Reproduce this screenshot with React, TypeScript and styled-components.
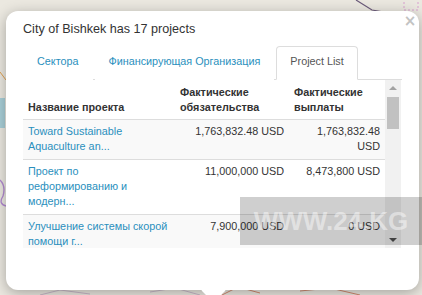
import React from 'react';
import styled, { createGlobalStyle } from 'styled-components';

const GlobalStyle = createGlobalStyle`
  html, body {
    margin: 0;
    padding: 0;
    background: #ebe8e0;
  }
  * {
    box-sizing: border-box;
  }
`;

const MapPage = styled.div`
  position: relative;
  width: 422px;
  height: 295px;
  overflow: hidden;
  background: #ebe8e0;
  font-family: 'Liberation Sans', Arial, sans-serif;
  padding: 11px 2px 0 6px;
`;

const MapLayer = styled.svg`
  position: absolute;
  left: 0;
  top: 0;
  width: 422px;
  height: 295px;
`;

const Popup = styled.div`
  position: relative;
  width: 413px;
  height: 279px;
  background: #fff;
  border-radius: 12px;
  box-shadow: 0 3px 14px rgba(0, 0, 0, 0.3);
  padding: 9px 17px 0 17px;

  &::after {
    content: '';
    position: absolute;
    left: 199px;
    bottom: -9px;
    width: 17px;
    height: 17px;
    background: #fff;
    transform: rotate(45deg);
  }
`;

const CloseButton = styled.span`
  position: absolute;
  top: 3px;
  right: 0;
  width: 18px;
  height: 14px;
  font: bold 15px/14px Tahoma, 'DejaVu Sans', sans-serif;
  color: #c3c3c3;
  text-align: center;
`;

const Title = styled.div`
  font-size: 12.6px;
  line-height: 19px;
  color: #333;
`;

const NavTabs = styled.ul`
  display: flex;
  list-style: none;
  margin: 7px 0 0 0;
  padding: 0;
  border-bottom: 1px solid #ddd;
`;

const Tab = styled.li<{ $active?: boolean }>`
  margin: 0 2px -1px 0;
  padding: 7px 13px;
  height: 34px;
  font-size: 10.8px;
  line-height: 15.4px;
  border: 1px solid ${({ $active }) => ($active ? '#ddd' : 'transparent')};
  border-bottom-color: ${({ $active }) => ($active ? '#fff' : 'transparent')};
  border-radius: 4px 4px 0 0;
  background: #fff;
  color: ${({ $active }) => ($active ? '#555' : '#2a8fbd')};
  white-space: nowrap;
`;

const TableFrame = styled.div`
  display: flex;
  height: 168px;
  width: 378px;
`;

const TableViewport = styled.div`
  width: 362px;
  overflow: hidden;
`;

const Table = styled.table`
  width: 362px;
  border-collapse: collapse;
  table-layout: fixed;
  font-size: 10.8px;
  line-height: 15.4px;
`;

const HeadCell = styled.th<{ $w: number }>`
  width: ${({ $w }) => $w}px;
  padding: 5px 5px 3px;
  text-align: left;
  vertical-align: bottom;
  font-weight: bold;
  color: #333;
  border-bottom: 1px solid #ddd;
`;

const Row = styled.tr<{ $striped?: boolean }>`
  background: ${({ $striped }) => ($striped ? '#f9f9f9' : '#fff')};
  border-top: 1px solid #ddd;
`;

const Cell = styled.td<{ $align?: 'left' | 'right' }>`
  padding: 4px 5px;
  vertical-align: top;
  text-align: ${({ $align }) => $align ?? 'left'};
  color: #333;
`;

const ProjectLink = styled.span`
  color: #2a8fbd;
`;

const Scrollbar = styled.div`
  width: 16px;
  display: flex;
  flex-direction: column;
  align-items: center;
  background: #f1f1f1;
`;

const ScrollArrow = styled.div<{ $down?: boolean; $dim?: boolean }>`
  width: 16px;
  height: 16px;
  display: flex;
  align-items: center;
  justify-content: center;
  margin-top: ${({ $down }) => ($down ? 'auto' : '0')};

  &::before {
    content: '';
    border-left: 4px solid transparent;
    border-right: 4px solid transparent;
    ${({ $down, $dim }) =>
      $down
        ? `border-top: 4px solid ${$dim ? '#a3a3a3' : '#505050'};`
        : `border-bottom: 4px solid ${$dim ? '#a3a3a3' : '#505050'};`}
  }
`;

const ScrollThumb = styled.div`
  width: 12px;
  height: 32px;
  margin-top: 1px;
  background: #c1c1c1;
`;

const Watermark = styled.div`
  position: absolute;
  left: 240px;
  top: 197px;
  width: 182px;
  height: 48px;
  background: rgba(0, 0, 0, 0.19);
  display: flex;
  align-items: center;
  justify-content: center;
  font: bold 26px/1 'Liberation Sans', Arial, sans-serif;
  color: rgba(255, 255, 255, 0.45);
`;

type Project = {
  name: string;
  committed: string;
  disbursed: string;
};

const projects: Project[] = [
  {
    name: 'Toward Sustainable Aquaculture an...',
    committed: '1,763,832.48 USD',
    disbursed: '1,763,832.48 USD',
  },
  {
    name: 'Проект по реформированию и модерн...',
    committed: '11,000,000 USD',
    disbursed: '8,473,800 USD',
  },
  {
    name: 'Улучшение системы скорой помощи г...',
    committed: '7,900,000 USD',
    disbursed: '0 USD',
  },
];

export default function App() {
  return (
    <>
      <GlobalStyle />
      <MapPage>
        <MapLayer viewBox="0 0 422 295">
          <path d="M356 0 L372 10 L384 12" stroke="#6b5a7a" strokeWidth="1.2" fill="none" />
          <rect x="404" y="-4" width="14" height="14" stroke="#d9a0d0" strokeDasharray="2 2" fill="none" />
          <rect x="0" y="98" width="5" height="30" fill="#a9cfd8" />
          <path d="M0 180 Q6 186 3 196 Q-2 204 6 206" stroke="#b28ad0" strokeWidth="1.4" fill="none" />
          <path d="M0 72 L6 80" stroke="#e0a050" strokeWidth="1" fill="none" />
          <path d="M40 295 L60 290 L90 294 M150 292 L175 288 L200 295" stroke="#c9b9c9" strokeWidth="1" fill="none" />
          <path d="M222 295 L238 287 L260 293 M300 291 L330 288 L360 295" stroke="#d08a70" strokeWidth="1" fill="none" />
        </MapLayer>
        <Popup>
          <CloseButton>×</CloseButton>
          <Title>City of Bishkek has 17 projects</Title>
          <NavTabs>
            <Tab>Сектора</Tab>
            <Tab>Финансирующая Организация</Tab>
            <Tab $active>Project List</Tab>
          </NavTabs>
          <TableFrame>
            <TableViewport>
              <Table>
                <thead>
                  <tr>
                    <HeadCell $w={152}>Название проекта</HeadCell>
                    <HeadCell $w={114}>Фактические обязательства</HeadCell>
                    <HeadCell $w={96}>Фактические выплаты</HeadCell>
                  </tr>
                </thead>
                <tbody>
                  {projects.map((p, i) => (
                    <Row key={p.name} $striped={i % 2 === 0}>
                      <Cell>
                        <ProjectLink>{p.name}</ProjectLink>
                      </Cell>
                      <Cell $align="right">{p.committed}</Cell>
                      <Cell $align="right">{p.disbursed}</Cell>
                    </Row>
                  ))}
                </tbody>
              </Table>
            </TableViewport>
            <Scrollbar>
              <ScrollArrow $dim />
              <ScrollThumb />
              <ScrollArrow $down />
            </Scrollbar>
          </TableFrame>
        </Popup>
        <Watermark>WWW.24.KG</Watermark>
      </MapPage>
    </>
  );
}
